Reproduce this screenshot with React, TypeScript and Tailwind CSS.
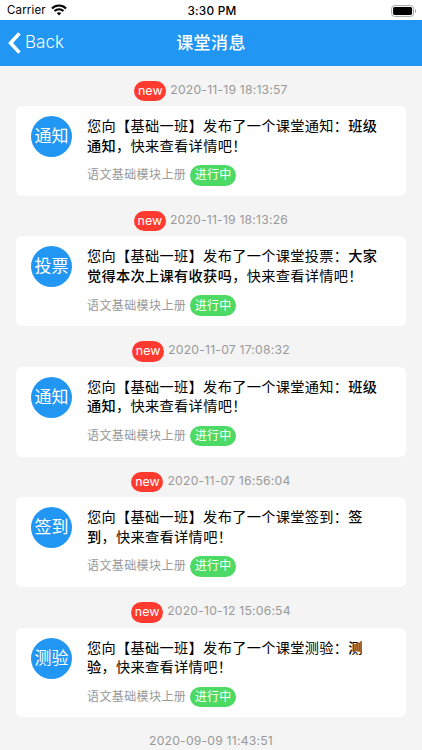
type Message = {
  type: string;
  topic: string;
  time: string;
};

const messageList: Message[] = [
  { type: "通知", topic: "班级通知", time: "2020-11-19 18:13:57" },
  { type: "投票", topic: "大家觉得本次上课有收获吗", time: "2020-11-19 18:13:26" },
  { type: "通知", topic: "班级通知", time: "2020-11-07 17:08:32" },
  { type: "签到", topic: "签到", time: "2020-11-07 16:56:04" },
  { type: "测验", topic: "测验", time: "2020-10-12 15:06:54" },
];

function StatusBar() {
  return (
    <div className="h-5 shrink-0 bg-white grid grid-cols-3 items-center pl-[7px] pr-[5px] pt-[2px] text-black">
      <div className="flex items-center gap-[5px]">
        <span className="text-[11.5px] leading-none tracking-[0.15px]">Carrier</span>
        <svg className="mb-[2px]" width="16" height="12" viewBox="0 0 16 12" fill="none" stroke="currentColor">
          <path d="M1 4.4C4.8.6 11.2.6 15 4.4" strokeWidth="2.1" />
          <path d="M3.5 7C6 4.6 10 4.6 12.5 7" strokeWidth="2" />
          <path d="M8 11.5 5.7 9.1c1.3-1.2 3.3-1.2 4.6 0z" fill="currentColor" stroke="none" />
        </svg>
      </div>
      <span className="text-center text-[11.8px] leading-none font-medium tracking-[0.25px] whitespace-nowrap pt-px">
        3:30 PM
      </span>
      <svg className="justify-self-end mb-[1px]" width="26" height="12" viewBox="0 0 26 12">
        <rect x=".6" y=".6" width="22" height="10.8" rx="3" fill="#fff" stroke="#a3a3a3" />
        <rect x="2.1" y="2.1" width="19" height="7.8" rx="1.6" />
        <path d="M24 4v4c1.6-.6 1.6-3.4 0-4z" fill="#a3a3a3" />
      </svg>
    </div>
  );
}

function NavBar() {
  return (
    <header className="h-[45.5px] shrink-0 bg-[#2196f3] text-white grid grid-cols-3 items-center px-2">
      <button type="button" className="flex items-center gap-[4px]">
        <svg width="13" height="22" viewBox="0 0 13 22" fill="none" stroke="currentColor" strokeWidth="3.6">
          <path d="M11.4 1.4 2.6 11l8.8 9.6" />
        </svg>
        <span className="text-[17px] leading-5 font-light pb-[2px]">Back</span>
      </button>
      <h1 className="text-center text-[17px] leading-5 font-medium tracking-[0.4px] whitespace-nowrap">
        课堂消息
      </h1>
    </header>
  );
}

function MessageItem({ message }: { message: Message }) {
  return (
    <li className="h-[130.4px] flex flex-col">
      <div className="h-[25.5px] flex items-start justify-center gap-1">
        <span className="h-[20.5px] w-8 flex items-center justify-center rounded-full bg-[#ff3b30] text-white text-[12.5px] leading-none">
          new
        </span>
        <time className="text-[12.2px] leading-none text-[#999] tracking-[0.2px] pt-[3px]">
          {message.time}
        </time>
      </div>
      <div className="mx-[15.6px] h-[89.8px] rounded-[6px] bg-white flex pl-[15.4px] pt-[10px]">
        <div className="size-[41px] shrink-0 rounded-full bg-[#2196f3] text-white text-[17px] leading-none flex items-center justify-center">
          {message.type}
        </div>
        <div className="ml-[15px] w-[296px]">
          <p className="text-[14.2px] leading-[19.5px] tracking-[0.33px] text-black">
            您向【基础一班】发布了一个课堂{message.type}：
            <span className="font-medium">{message.topic}</span>
            ，快来查看详情吧！
          </p>
          <div className="mt-[10px] flex items-center gap-1">
            <span className="text-[12px] leading-none tracking-[0.4px] text-[#999]">
              语文基础模块上册
            </span>
            <span className="h-[20.5px] w-[46px] flex items-center justify-center rounded-full bg-[#4cd964] text-white text-[12px] leading-none tracking-[0.3px]">
              进行中
            </span>
          </div>
        </div>
      </div>
    </li>
  );
}

export default function App() {
  return (
    <div
      lang="zh-CN"
      className="w-full h-[750px] overflow-hidden flex flex-col bg-[#f4f4f4] font-[Inter,'Noto_Sans_CJK_SC',sans-serif]"
    >
      <StatusBar />
      <NavBar />
      <ul className="pt-[15px]">
        {messageList.map((message) => (
          <MessageItem key={message.time} message={message} />
        ))}
        <li className="h-[18px] flex items-center justify-center">
          <time className="text-[12.2px] leading-none text-[#999] tracking-[0.2px]">
            2020-09-09 11:43:51
          </time>
        </li>
      </ul>
    </div>
  );
}
